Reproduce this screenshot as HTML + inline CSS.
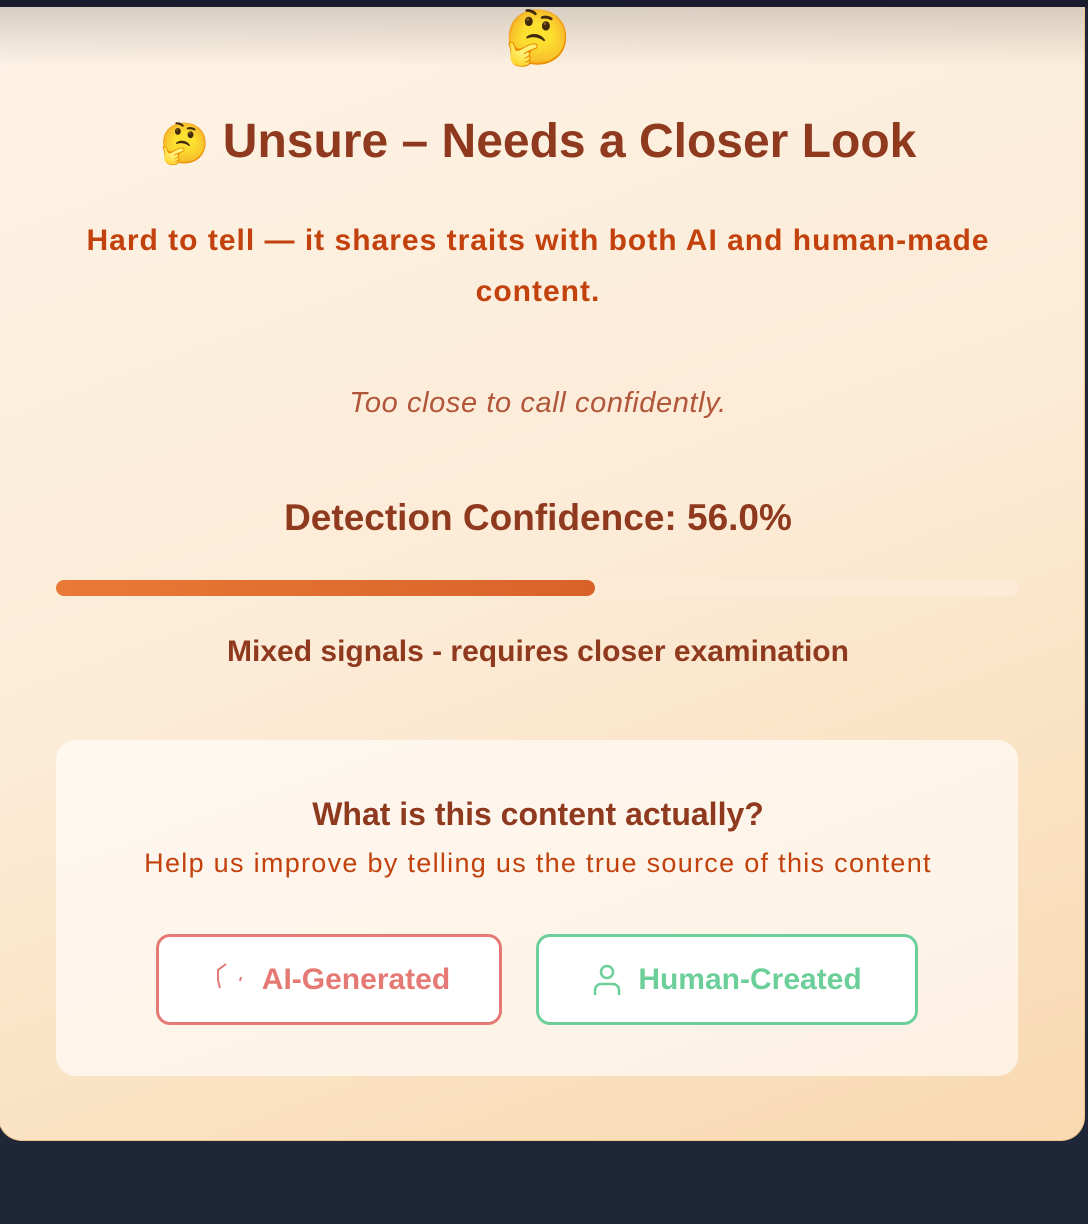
<!DOCTYPE html>
<html><head><meta charset="utf-8"><style>
html,body{margin:0;padding:0;width:1088px;height:1224px;background:#1f2638;overflow:hidden;font-family:"Liberation Sans",sans-serif}
.top{position:absolute;left:0;top:0;width:1088px;height:8px;background:#1a1a2e}
.card{position:absolute;left:-2px;top:7px;width:1085px;height:1133px;border:1px solid #f0c48a;border-top:none;border-radius:0 0 24px 24px;background:linear-gradient(160deg,#fdf3e6 0%,#fcebd6 50%,#f8d9b0 100%);overflow:hidden}
.card:before{content:"";position:absolute;left:0;top:0;right:0;height:60px;background:linear-gradient(#00000026,#0000)}
.c{position:absolute;left:-6px;width:1088px;text-align:center;white-space:nowrap}
.emo{font-family:"Noto Color Emoji","DejaVu Sans",sans-serif}
</style></head><body>
<div class="top"></div>
<div class="card"></div>
<div class="c emo" style="top:4px;font-size:54px;line-height:70px">🤔</div>
<div class="c" style="top:112px;font-size:48px;font-weight:bold;color:#8f3a1e;line-height:60px"><span class="emo" style="font-size:40px">🤔</span> Unsure – Needs a Closer Look</div>
<div class="c" style="top:215px;font-size:30px;font-weight:bold;color:#c2410c;line-height:51px;white-space:normal;padding:0 60px;box-sizing:border-box;letter-spacing:1px">Hard to tell — it shares traits with both AI and human-made content.</div>
<div class="c" style="top:385px;font-size:29px;font-style:italic;color:#b0563a;line-height:36px;letter-spacing:0.6px">Too close to call confidently.</div>
<div class="c" style="top:497px;font-size:37px;font-weight:bold;color:#8f3a1e;line-height:42px">Detection Confidence: 56.0%</div>
<div style="position:absolute;left:56px;top:580px;width:962px;height:16px;border-radius:8px;background:#fdebd8"></div>
<div style="position:absolute;left:56px;top:580px;width:539px;height:16px;border-radius:8px;background:linear-gradient(90deg,#e87a35,#d9622b)"></div>
<div class="c" style="top:634px;font-size:30px;font-weight:bold;color:#8f3a1e;line-height:36px">Mixed signals - requires closer examination</div>
<div style="position:absolute;left:56px;top:740px;width:962px;height:336px;border-radius:20px;background:linear-gradient(160deg,#fef8f1,#fdf1e3)"></div>
<div class="c" style="top:795px;font-size:32px;font-weight:bold;color:#8f3a1e;line-height:38px">What is this content actually?</div>
<div class="c" style="top:846px;font-size:27px;color:#c2410c;line-height:34px;letter-spacing:1.3px">Help us improve by telling us the true source of this content</div>
<div style="position:absolute;left:156px;top:934px;width:340px;height:85px;border:3px solid #e57a74;border-radius:14px;background:#fff;color:#e57a74;font-size:30px;font-weight:bold;display:flex;align-items:center;justify-content:center;gap:14px">
<svg width="40" height="40" viewBox="0 0 40 40"><path d="M18 4 L10 10 L10 20 L12 28" fill="none" stroke="#e57a74" stroke-width="2"/><path d="M33 17 L32 21" stroke="#e57a74" stroke-width="2"/></svg>AI-Generated</div>
<div style="position:absolute;left:536px;top:934px;width:376px;height:85px;border:3px solid #6ccf9a;border-radius:14px;background:#fff;color:#6ccf9a;font-size:30px;font-weight:bold;display:flex;align-items:center;justify-content:center;gap:16px">
<svg width="30" height="34" viewBox="0 0 30 34"><circle cx="15" cy="9" r="6" fill="none" stroke="#6ccf9a" stroke-width="2.5"/><path d="M3 32 V27 a6 6 0 0 1 6-6 h12 a6 6 0 0 1 6 6 V32" fill="none" stroke="#6ccf9a" stroke-width="2.5"/></svg>Human-Created</div>
</body></html>
